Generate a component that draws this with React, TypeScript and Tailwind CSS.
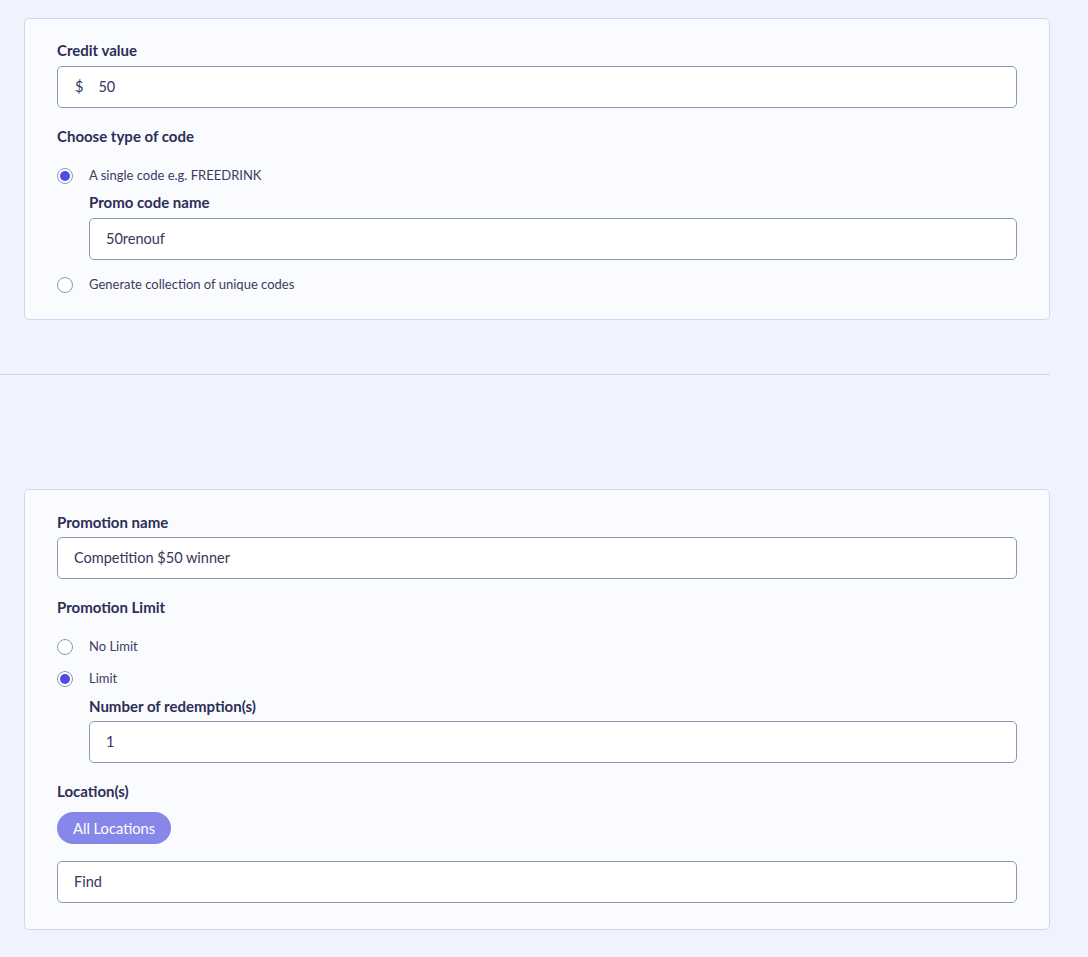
import React from "react";

const font = { fontFamily: "Lato, 'Noto Sans', sans-serif" };

function Label({ children, className = "" }: { children: React.ReactNode; className?: string }) {
  return (
    <div className={`text-[15px] leading-[20px] font-bold text-[#2c2e55] ${className}`}>{children}</div>
  );
}

function Input({ children, className = "" }: { children: React.ReactNode; className?: string }) {
  return (
    <div
      className={`h-[42px] flex items-center rounded-[5px] border border-[#8e98ad] bg-white px-4 text-[14.5px] text-[#34365c] ${className}`}
    >
      {children}
    </div>
  );
}

function Radio({ checked, label, className = "" }: { checked?: boolean; label: string; className?: string }) {
  return (
    <div className={`flex items-center h-[20px] ${className}`}>
      <div className="w-[16px] h-[16px] rounded-full border border-[#8e98ad] bg-white flex items-center justify-center">
        {checked && <div className="w-[10px] h-[10px] rounded-full bg-[#4f4be6]" />}
      </div>
      <span className="ml-[16px] text-[13px] text-[#3a3c60]">{label}</span>
    </div>
  );
}

export default function App() {
  return (
    <div className="min-h-[957px] w-full bg-[#f0f3fe] pt-[18px] pb-[26px]" style={font}>
      <div className="w-[1026px] ml-[24px]">
        <div className="rounded-[5px] border border-[#d5d5f3] bg-[#fafbff] px-[32px] pt-[21px] pb-[24px]">
          <Label>Credit value</Label>
          <Input className="mt-[6px]">
            <span className="ml-[1px]">$</span>
            <span className="ml-[15px]">50</span>
          </Input>
          <Label className="mt-[18px]">Choose type of code</Label>
          <Radio checked label="A single code e.g. FREEDRINK" className="mt-[20px]" />
          <div className="pl-[32px]">
            <Label className="mt-[6px]">Promo code name</Label>
            <Input className="mt-[6px]">50renouf</Input>
          </div>
          <Radio label="Generate collection of unique codes" className="mt-[15px]" />
        </div>
      </div>
      <div className="w-[1050px] h-px bg-[#d3d6e8] mt-[54px]" />
      <div className="w-[1026px] ml-[24px] mt-[114px]">
        <div className="rounded-[5px] border border-[#d5d5f3] bg-[#fafbff] px-[32px] pt-[22px] pb-[26px]">
          <Label>Promotion name</Label>
          <Input className="mt-[5px]">Competition $50 winner</Input>
          <Label className="mt-[18px]">Promotion Limit</Label>
          <Radio label="No Limit" className="mt-[20px]" />
          <Radio checked label="Limit" className="mt-[12px]" />
          <div className="pl-[32px]">
            <Label className="mt-[7px]">Number of redemption(s)</Label>
            <Input className="mt-[5px]">1</Input>
          </div>
          <Label className="mt-[18px]">Location(s)</Label>
          <div className="mt-[11px] flex">
            <div className="h-[32px] px-[16px] rounded-full bg-[#8787ea] text-white text-[14.7px] flex items-center">
              All Locations
            </div>
          </div>
          <Input className="mt-[17px]">Find</Input>
        </div>
      </div>
    </div>
  );
}
